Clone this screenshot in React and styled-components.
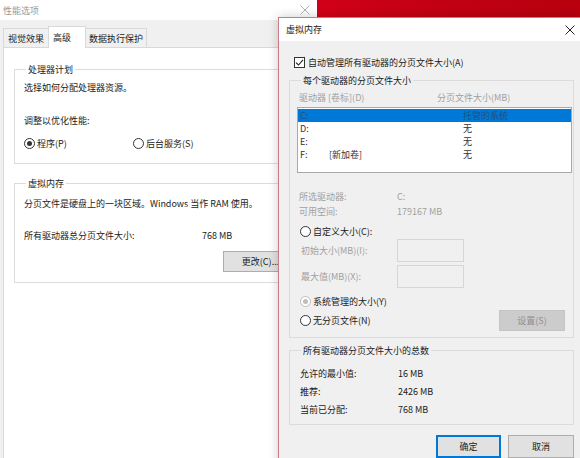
import React from 'react'
import styled, { createGlobalStyle } from 'styled-components'

const GlobalStyle = createGlobalStyle`
  html, body { margin: 0; padding: 0; }
  body {
    width: 580px;
    height: 458px;
    overflow: hidden;
    font-family: "Noto Sans CJK SC", "Noto Sans", sans-serif;
    font-size: 9px;
    line-height: 13px;
    color: #1b1b1b;
  }
  * { box-sizing: border-box; }
`

const Desktop = styled.div`
  position: relative;
  width: 580px;
  height: 458px;
  overflow: hidden;
  background: linear-gradient(90deg, #e4001c 0%, #d9001a 45%, #c20014 75%, #b8000f 100%);
`

// windows sit on the desktop at their own places
const Window = styled.div`
  position: absolute;
  left: ${p => p.$x}px;
  top: ${p => p.$y}px;
  width: ${p => p.$w}px;
  height: ${p => p.$h}px;
  display: flex;
  flex-direction: column;
  background: #f0f0f0;
  ${p => p.$active && `
    border: 1px solid #c97a86;
    box-shadow: 0 0 10px rgba(0, 0, 0, 0.2);
  `}
`

const TitleBar = styled.div`
  height: ${p => p.$h}px;
  flex: none;
  display: flex;
  align-items: center;
  justify-content: space-between;
  padding: ${p => p.$pad};
  background: #fff;
  color: ${p => p.$dim ? '#9a9a9a' : '#1b1b1b'};
`

const Close = ({ color }) => (
  <svg width="10" height="10" viewBox="0 0 10 10">
    <path d="M0.5 0.5 L9.5 9.5 M9.5 0.5 L0.5 9.5" stroke={color} strokeWidth="1" />
  </svg>
)

/* ---------- back window ---------- */

const BackBody = styled.div`
  flex: 1;
  display: flex;
  flex-direction: column;
  padding-top: 6px;
`

const Tabs = styled.div`
  display: flex;
  align-items: flex-end;
  margin-left: 3px;
`

const Tab = styled.div`
  height: ${p => p.$active ? 22 : 19}px;
  display: flex;
  align-items: center;
  padding: ${p => p.$pad};
  border: 1px solid #d9d9d9;
  border-bottom: none;
  margin-right: -1px;
  margin-bottom: ${p => p.$active ? -1 : 0}px;
  background: ${p => p.$active ? '#fff' : '#f0f0f0'};
  position: relative;
  z-index: ${p => p.$active ? 1 : 0};
`

const Panel = styled.div`
  flex: 1;
  width: 310px;
  margin-left: 3px;
  border: 1px solid #d9d9d9;
  background: #fff;
  padding: 15px 8px 0 10px;
`

const Group = styled.fieldset`
  margin: ${p => p.$mt || 0}px 0 0 0;
  padding: 0 ${p => p.$pr ?? 9}px ${p => p.$pb}px ${p => p.$pl ?? 9}px;
  border: 1px solid #dcdcdc;
  min-width: 0;
`

const Legend = styled.legend`
  margin-left: ${p => p.$ml ?? 2}px;
  padding: 0 2px;
  line-height: 13px;
  color: #1b1b1b;
`

const Line = styled.div`
  margin-top: ${p => p.$mt || 0}px;
  padding-left: ${p => p.$pl || 0}px;
  color: ${p => p.$dim ? '#a0a0a0' : 'inherit'};
  display: flex;
  align-items: center;
  min-height: 13px;
`

const Cell = styled.span`
  width: ${p => p.$w}px;
  flex: none;
`

const RadioWrap = styled.label`
  display: flex;
  align-items: center;
  gap: 2px;
  width: ${p => p.$w ? p.$w + 'px' : 'auto'};
  color: ${p => p.$dim ? '#a0a0a0' : 'inherit'};
`

const RadioDot = styled.span`
  width: 11px;
  height: 11px;
  flex: none;
  border-radius: 50%;
  border: 1px solid ${p => p.$dim ? '#bdbdbd' : '#333'};
  background: #fff;
  display: flex;
  align-items: center;
  justify-content: center;
  &::after {
    content: '';
    width: 5px;
    height: 5px;
    border-radius: 50%;
    background: ${p => p.$dim ? '#bdbdbd' : '#333'};
    display: ${p => p.$on ? 'block' : 'none'};
  }
`

const Radio = ({ on, dim, w, children }) => (
  <RadioWrap $w={w}>
    <RadioDot $on={on} $dim={dim} />
    {children}
  </RadioWrap>
)

const Button = styled.div`
  width: ${p => p.$w}px;
  height: ${p => p.$h || 21}px;
  flex: none;
  display: flex;
  align-items: center;
  justify-content: center;
  background: ${p => p.$disabled ? '#cccccc' : '#e1e1e1'};
  border: ${p => p.$primary ? '2px solid #0078d7' : `1px solid ${p.$disabled ? '#c4c4c4' : '#adadad'}`};
  color: ${p => p.$disabled ? '#8f8f8f' : '#1b1b1b'};
`

const ButtonRow = styled.div`
  display: flex;
  justify-content: ${p => p.$justify || 'flex-start'};
  gap: 7px;
  margin-top: ${p => p.$mt || 0}px;
  padding-left: ${p => p.$pl || 0}px;
`

/* ---------- dialog ---------- */

const DialogBody = styled.div`
  flex: 1;
  display: flex;
  flex-direction: column;
  padding: 0 6px 0 10px;
`

const CheckRow = styled.label`
  display: flex;
  align-items: center;
  gap: 3px;
  margin: 15px 0 0 5px;
`

const CheckBox = styled.span`
  width: 11px;
  height: 11px;
  border: 1px solid #333;
  background: #fff;
  display: flex;
  align-items: center;
  justify-content: center;
`

const ListBox = styled.div`
  margin-top: 3px;
  height: 66px;
  border: 1px solid #a9a9a9;
  background: #fff;
  padding-top: 1px;
`

const ListRow = styled.div`
  height: 13px;
  display: flex;
  align-items: center;
  padding-left: 2px;
  background: ${p => p.$sel ? '#0078d7' : 'transparent'};
  color: ${p => p.$sel ? '#22507e' : '#333'};
`

const InputRow = styled.div`
  display: flex;
  align-items: center;
  margin-top: ${p => p.$mt}px;
  padding-left: 4px;
  color: #a0a0a0;
`

const Field = styled.div`
  width: 67px;
  height: 23px;
  border: 1px solid #d6d6d6;
  background: #f0f0f0;
`

const drives = [
  { d: 'C:', label: '', size: '托管的系统', sel: true },
  { d: 'D:', label: '', size: '无' },
  { d: 'E:', label: '', size: '无' },
  { d: 'F:', label: '[新加卷]', size: '无' },
]

const totals = [
  ['允许的最小值:', '16 MB'],
  ['推荐:', '2426 MB'],
  ['当前已分配:', '768 MB'],
]

export default function App() {
  return (
    <Desktop>
      <GlobalStyle />

      <Window $x={0} $y={0} $w={317} $h={470}>
        <TitleBar $h={20} $pad="0 7px 0 3px" $dim>
          <span>性能选项</span>
          <Close color="#b4b4b4" />
        </TitleBar>
        <BackBody>
          <Tabs>
            <Tab $pad="0 4px">视觉效果</Tab>
            <Tab $pad="0 14px 0 4px" $active>高级</Tab>
            <Tab $pad="0 3px">数据执行保护</Tab>
          </Tabs>
          <Panel>
            <Group $pb={13}>
              <Legend>处理器计划</Legend>
              <Line $mt={5}>选择如何分配处理器资源。</Line>
              <Line $mt={20}>调整以优化性能:</Line>
              <Line $mt={10}>
                <Radio on w={109}>程序(P)</Radio>
                <Radio>后台服务(S)</Radio>
              </Line>
            </Group>
            <Group $mt={13} $pb={10}>
              <Legend>虚拟内存</Legend>
              <Line $mt={7}>分页文件是硬盘上的一块区域。Windows 当作 RAM 使用。</Line>
              <Line $mt={19}>
                <Cell $w={178}>所有驱动器总分页文件大小:</Cell>
                <span>768 MB</span>
              </Line>
              <ButtonRow $mt={9} $pl={199}>
                <Button $w={75}>更改(C)...</Button>
              </ButtonRow>
            </Group>
          </Panel>
        </BackBody>
      </Window>

      <Window $x={278} $y={17} $w={303} $h={460} $active>
        <TitleBar $h={23} $pad="0 5px 0 7px">
          <span>虚拟内存</span>
          <Close color="#222" />
        </TitleBar>
        <DialogBody>
          <CheckRow>
            <CheckBox>
              <svg width="9" height="9" viewBox="0 0 9 9">
                <path d="M1 4.6 L3.5 7 L8 1.8" stroke="#222" strokeWidth="1.1" fill="none" />
              </svg>
            </CheckBox>
            自动管理所有驱动器的分页文件大小(A)
          </CheckRow>

          <Group $mt={5} $pl={7} $pr={1} $pb={6}>
            <Legend $ml={4}>每个驱动器的分页文件大小</Legend>
            <Line $mt={4} $pl={2} $dim>
              <Cell $w={138}>驱动器 [卷标](D)</Cell>
              <span>分页文件大小(MB)</span>
            </Line>
            <ListBox>
              {drives.map(r => (
                <ListRow key={r.d} $sel={r.sel}>
                  <Cell $w={29}>{r.d}</Cell>
                  <Cell $w={134}>{r.label}</Cell>
                  <span>{r.size}</span>
                </ListRow>
              ))}
            </ListBox>
            <Line $mt={17} $pl={2} $dim>
              <Cell $w={98}>所选驱动器:</Cell>
              <span>C:</span>
            </Line>
            <Line $mt={2} $pl={2} $dim>
              <Cell $w={98}>可用空间:</Cell>
              <span>179167 MB</span>
            </Line>
            <Line $mt={7} $pl={3}>
              <Radio>自定义大小(C):</Radio>
            </Line>
            <InputRow $mt={1}>
              <Cell $w={96}>初始大小(MB)(I):</Cell>
              <Field />
            </InputRow>
            <InputRow $mt={3}>
              <Cell $w={96}>最大值(MB)(X):</Cell>
              <Field />
            </InputRow>
            <Line $mt={7} $pl={3}>
              <Radio on dim>系统管理的大小(Y)</Radio>
            </Line>
            <ButtonRow $mt={2} $pl={3} $justify="space-between">
              <Radio>无分页文件(N)</Radio>
              <Button $w={66} $disabled style={{ marginRight: 7 }}>设置(S)</Button>
            </ButtonRow>
          </Group>

          <Group $mt={6} $pl={7} $pb={8}>
            <Legend $ml={4}>所有驱动器分页文件大小的总数</Legend>
            {totals.map(([k, v], i) => (
              <Line key={k} $mt={i === 0 ? 10 : 5} $pl={3}>
                <Cell $w={98}>{k}</Cell>
                <span>{v}</span>
              </Line>
            ))}
          </Group>

          <ButtonRow $mt={10} $justify="flex-end">
            <Button $w={65} $h={23} $primary>确定</Button>
            <Button $w={66} $h={23}>取消</Button>
          </ButtonRow>
        </DialogBody>
      </Window>
    </Desktop>
  )
}
